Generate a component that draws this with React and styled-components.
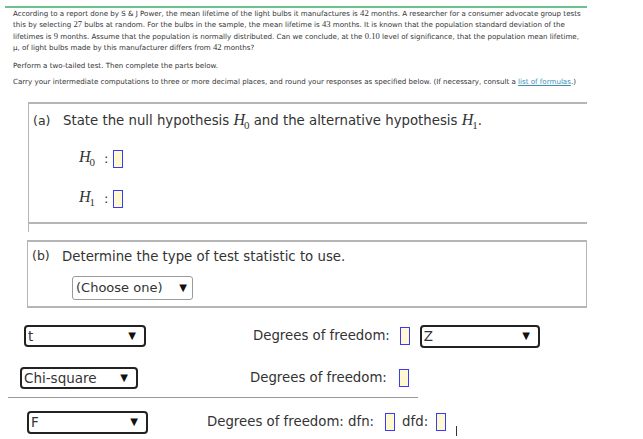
import React from "react"
import styled, { createGlobalStyle } from "styled-components"

const GlobalStyle = createGlobalStyle`
  body {
    margin: 0;
    background: #fff;
    font-family: "DejaVu Sans", Verdana, sans-serif;
    color: #333;
  }
`

const Page = styled.div`
  width: 643px;
  height: 439px;
  overflow: hidden;
  padding-top: 6px;
  box-sizing: border-box;
`

const TopRule = styled.div`
  margin-left: 5px;
  width: 582px;
  height: 2px;
  background: #6cc28c;
`

const Intro = styled.div`
  padding-left: 13px;
  font-size: 7.1px;
  line-height: 11.3px;
  color: #333;
  white-space: nowrap;
`

const IntroPara = styled.p`
  margin: 0 0 ${p => p.$gap || 0}px 0;
`

const Num = styled.span`
  font-family: "Liberation Serif", serif;
  font-size: 8.6px;
  line-height: 1;
`

const FormulaLink = styled.a`
  color: #3a8fb7;
  text-decoration: underline;
`

const PartBox = styled.div`
  margin-left: ${p => p.$left}px;
  width: ${p => 587 - p.$left}px;
  border-top: 2px solid #b5b5b5;
  border-left: 1px solid #b5b5b5;
  border-right: ${p => (p.$right ? "1px solid #b5b5b5" : "none")};
  border-bottom: ${p => (p.$bottom ? "2px solid #b5b5b5" : "none")};
  padding-bottom: ${p => p.$pb || 0}px;
  box-sizing: border-box;
`

const PartHeading = styled.div`
  display: flex;
  align-items: center;
  padding: ${p => p.$top}px 0 0 4px;
  font-size: 13.3px;
  line-height: 16px;
  color: #333;
  height: ${p => p.$height}px;
  box-sizing: border-box;
`

const PartLabel = styled.span`
  width: 30px;
  flex-shrink: 0;
  font-size: 12.5px;
  margin-top: -2px;
`

const HypRow = styled.div`
  display: flex;
  align-items: center;
  padding-left: 50px;
  height: 40px;
  font-size: 13px;
  line-height: 16px;
`

const MathGroup = styled.span`
  white-space: nowrap;
  line-height: 16px;
`

const MathVar = styled.span`
  font-family: "Liberation Serif", "Times New Roman", serif;
  font-style: italic;
  font-size: 16px;
  line-height: 1;
  color: #333;
`

const Sub = styled.sub`
  font-family: "Liberation Serif", serif;
  font-style: normal;
  font-size: 11px;
  line-height: 1;
  vertical-align: -4px;
  margin-left: -1px;
`

const Colon = styled.span`
  margin: 0 5px 0 9px;
`

const Blank = styled.span`
  display: inline-block;
  width: 10px;
  height: 18px;
  border: 1px solid #3a3aff;
  background: #fff9d2;
  box-sizing: border-box;
  margin-left: ${p => p.$ml || 0}px;
  margin-right: ${p => p.$mr || 0}px;
  flex-shrink: 0;
`

const Spacer = styled.div`
  height: ${p => p.$h}px;
`

const StubRow = styled.div`
  margin-left: 28px;
  height: 8px;
  border-left: 1px solid #b5b5b5;
`

const ChooseSelect = styled.div`
  margin: 9px 0 0 44px;
  width: 121px;
  height: 24px;
  border: 1px solid #9a9a9a;
  border-radius: 3px;
  box-sizing: border-box;
  display: flex;
  align-items: center;
  justify-content: space-between;
  padding: 0 5px 0 3px;
  font-size: 13px;
  line-height: 16px;
  color: #333;
`

const Arrow = styled.span`
  font-size: 10px;
  color: #111;
  font-family: "DejaVu Sans", sans-serif;
`

const OptionRow = styled.div`
  display: flex;
  align-items: center;
  padding-left: ${p => p.$indent}px;
  margin-top: ${p => p.$top}px;
  font-size: 13.3px;
  line-height: 16px;
  color: #333;
`

const PickBox = styled.div`
  width: ${p => p.$w}px;
  height: ${p => p.$h || 22}px;
  border: 2px solid #222;
  border-radius: 4px;
  box-sizing: border-box;
  display: flex;
  align-items: center;
  justify-content: space-between;
  padding: 0 8px 0 2px;
  font-size: 13.5px;
  color: #333;
  background: #fff;
  flex-shrink: 0;
  margin-left: ${p => p.$ml || 0}px;
`

const Label = styled.span`
  margin-left: ${p => p.$ml || 0}px;
  white-space: nowrap;
`

const Divider = styled.div`
  margin: 8px 0 0 8px;
  width: 410px;
  height: 1px;
  background: #999;
`

const Caret = styled.span`
  width: 1px;
  height: 10px;
  background: #333;
  margin-left: 10px;
  align-self: flex-end;
  margin-bottom: -2px;
`

export default function App() {
  return (
    <>
      <GlobalStyle />
      <Page>
        <TopRule />
        <Intro>
          <IntroPara $gap={7}>
            According to a report done by S &amp; J Power, the mean lifetime of the light bulbs it manufactures is <Num>42</Num> months. A researcher for a consumer advocate group tests
            <br />
            this by selecting <Num>27</Num> bulbs at random. For the bulbs in the sample, the mean lifetime is <Num>43</Num> months. It is known that the population standard deviation of the
            <br />
            lifetimes is <Num>9</Num> months. Assume that the population is normally distributed. Can we conclude, at the <Num>0.10</Num> level of significance, that the population mean lifetime,
            <br />
            μ, of light bulbs made by this manufacturer differs from <Num>42</Num> months?
          </IntroPara>
          <IntroPara $gap={5}>Perform a two-tailed test. Then complete the parts below.</IntroPara>
          <IntroPara>
            Carry your intermediate computations to three or more decimal places, and round your responses as specified below. (If necessary, consult a{" "}
            <FormulaLink href="#">list of formulas</FormulaLink>.)
          </IntroPara>
        </Intro>

        <Spacer $h={14} />
        <PartBox $left={28} $bottom $pb={3}>
          <PartHeading $top={1} $height={35}>
            <PartLabel>(a)</PartLabel>
            <span>
              State the null hypothesis{" "}
              <MathGroup>
                <MathVar>H</MathVar>
                <Sub>0</Sub>
              </MathGroup>{" "}
              and the alternative hypothesis{" "}
              <MathGroup>
                <MathVar>H</MathVar>
                <Sub>1</Sub>
              </MathGroup>
              .
            </span>
          </PartHeading>
          <HypRow>
            <MathGroup>
              <MathVar>H</MathVar>
              <Sub>0</Sub>
            </MathGroup>
            <Colon>:</Colon>
            <Blank />
          </HypRow>
          <HypRow>
            <MathGroup>
              <MathVar>H</MathVar>
              <Sub>1</Sub>
            </MathGroup>
            <Colon>:</Colon>
            <Blank />
          </HypRow>
        </PartBox>
        <StubRow />

        <Spacer $h={8} />
        <PartBox $left={27} $right $bottom $pb={6}>
          <PartHeading $top={5} $height={25}>
            <PartLabel>(b)</PartLabel>
            <span>Determine the type of test statistic to use.</span>
          </PartHeading>
          <ChooseSelect>
            <span>(Choose one)</span>
            <Arrow>▼</Arrow>
          </ChooseSelect>
        </PartBox>

        <OptionRow $indent={24} $top={17}>
          <PickBox $w={122}>
            <span>t</span>
            <Arrow>▼</Arrow>
          </PickBox>
          <Label $ml={107}>Degrees of freedom:</Label>
          <Blank $ml={10} />
          <PickBox $w={120} $h={23} $ml={10}>
            <span>Z</span>
            <Arrow>▼</Arrow>
          </PickBox>
        </OptionRow>

        <OptionRow $indent={20} $top={19}>
          <PickBox $w={118}>
            <span>Chi-square</span>
            <Arrow>▼</Arrow>
          </PickBox>
          <Label $ml={112}>Degrees of freedom:</Label>
          <Blank $ml={12} />
        </OptionRow>

        <Divider />

        <OptionRow $indent={27} $top={13}>
          <PickBox $w={121} $h={23}>
            <span>F</span>
            <Arrow>▼</Arrow>
          </PickBox>
          <Label $ml={59}>Degrees of freedom: dfn:</Label>
          <Blank $ml={11} $mr={7} />
          <Label>dfd:</Label>
          <Blank $ml={8} />
          <Caret />
        </OptionRow>
      </Page>
    </>
  )
}
